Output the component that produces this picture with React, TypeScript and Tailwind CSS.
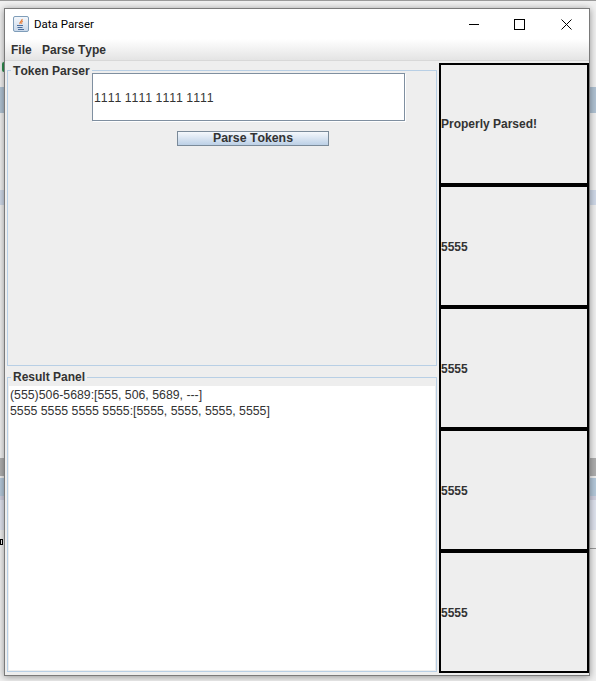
const JavaIcon = () => (
  <div className="flex h-[16px] w-[16px] items-center justify-center rounded-[2px] border border-[#7f9db9] bg-gradient-to-b from-[#f4f7fb] to-[#c9d8ea]">
    <svg width="12" height="13" viewBox="0 0 12 13" fill="none">
      <path d="M7 1c1 2-3 3-2 5" stroke="#e8762b" strokeWidth="1.2" />
      <path d="M8 3c-1 1-2 2-1 3" stroke="#e8762b" strokeWidth="1" />
      <path d="M2 7.5h6M2.5 9.5h5M3 11.5h6" stroke="#4a6d9c" strokeWidth="1" />
    </svg>
  </div>
);

const RIGHT_CELLS = ["5555", "5555", "5555", "5555"];

// whatever is peeking out from behind the window
const Desktop = () => (
  <div className="flex h-[681px] flex-col">
    <div className="h-[1px] bg-[#9a9a9a]" />
    <div className="h-[86px] bg-[#f0f0f0]" />
    <div className="h-[26px] bg-[#b0c2d3]" />
    <div className="h-[77px] bg-[#f0f0f0]" />
    <div className="h-[15px] bg-[#cfd9e8]" />
    <div className="h-[253px] bg-[#f0f0f0]" />
    <div className="h-[18px] bg-[#aeaeae]" />
    <div className="h-[2px] bg-[#f0f0f0]" />
    <div className="h-[18px] bg-[#b4c8da]" />
    <div className="h-[4px] bg-[#cfcfdf]" />
    <div className="h-[30px] bg-[#dfe3ee]" />
    <div className="flex-1 bg-[#f0f0f0]" />
  </div>
);

const App = () => {
  return (
    <div
      className="relative h-[681px] w-[596px] overflow-hidden text-[#333] [font-kerning:none]"
      style={{ fontFamily: '"Liberation Sans", Arial, sans-serif' }}
    >
      <Desktop />
      <div className="absolute left-[2px] top-[62px] h-[10px] w-[4px] rounded-full bg-[#2f8f4e]" />
      <div className="absolute left-0 top-[539px] h-[6px] w-[3px] border border-black" />
      <div className="absolute left-[590px] top-[548px] h-[1px] w-[6px] bg-[#999999]" />
      <div className="absolute left-[4px] top-[8px] flex h-[668px] w-[586px] flex-col border border-[#7a7a7a] bg-[#eeeeee] shadow-[0_1px_7px_rgba(0,0,0,0.4)]">
        {/* title bar */}
        <div className="flex h-[30px] shrink-0 items-center bg-white pl-[8px]">
          <JavaIcon />
          <span className="ml-[5px] pt-[1px] text-[11.5px] text-black" style={{ fontFamily: "Roboto, sans-serif" }}>Data Parser</span>
          <div className="ml-auto flex items-center">
            <div className="flex w-[46px] justify-center">
              <div className="h-[1px] w-[10px] bg-black" />
            </div>
            <div className="flex w-[46px] justify-center pr-[2px]">
              <div className="h-[11px] w-[11px] border border-black" />
            </div>
            <div className="flex w-[46px] justify-center">
              <svg width="11" height="11" viewBox="0 0 11 11" stroke="#000" strokeWidth="1">
                <path d="M0.5 0.5l10 10M10.5 0.5l-10 10" />
              </svg>
            </div>
          </div>
        </div>
        {/* menu bar */}
        <div className="flex h-[22px] shrink-0 items-center gap-[12px] border-b border-[#d8d8d8] bg-gradient-to-b from-white to-[#e4e4e4] pl-[6px] text-[12px] font-bold">
          <span className="w-[19px]">File</span>
          <span>Parse Type</span>
        </div>
        <div className="flex min-h-0 flex-1 pb-[2px] pl-[2px] pt-[2px]">
          {/* left column */}
          <div className="flex w-[430px] flex-col pb-[1px] pt-[7px]">
            <div className="relative h-[296px] shrink-0 border border-[#b8cfe5] pt-[2px]">
              <span className="absolute -top-[7px] left-[3px] bg-[#eeeeee] px-[2px] text-[12.1px] font-bold leading-[14px]">Token Parser</span>
              <div className="ml-[84px] flex h-[48px] w-[313px] items-center border border-[#7f8fa0] bg-white pl-[1px] pt-[2px] text-[12.3px] shadow-[1px_1px_0_#ffffff]">
                1111 1111 1111 1111
              </div>
              <div className="ml-[169px] mt-[10px] flex h-[15px] w-[152px] items-center justify-center border border-[#7a8a99] bg-gradient-to-b from-[#f5f8fc] to-[#bcd0e6] text-[12.3px] font-bold">
                Parse Tokens
              </div>
            </div>
            <div className="relative mt-[11px] flex min-h-0 flex-1 flex-col border border-[#b8cfe5] px-[1px] pb-[1px] pt-[8px]">
              <span className="absolute -top-[8px] left-[3px] bg-[#eeeeee] px-[2px] text-[12px] font-bold leading-[14px]">Result Panel</span>
              <div className="flex-1 bg-white pl-[1px] pt-[1px] text-[12.3px] leading-[16px]">
                <div>(555)506-5689:[555, 506, 5689, ---]</div>
                <div>5555 5555 5555 5555:[5555, 5555, 5555, 5555]</div>
              </div>
            </div>
          </div>
          {/* right column */}
          <div className="ml-[2px] flex w-[150px] flex-col">
            <div className="flex h-[122px] items-center border-2 border-black text-[12px] font-bold">
              Properly Parsed!
            </div>
            {RIGHT_CELLS.map((value, i) => (
              <div key={i} className="flex h-[122px] items-center border-2 border-black pt-[2px] text-[12px] font-bold">
                {value}
              </div>
            ))}
          </div>
        </div>
      </div>
    </div>
  );
};

export default App;
